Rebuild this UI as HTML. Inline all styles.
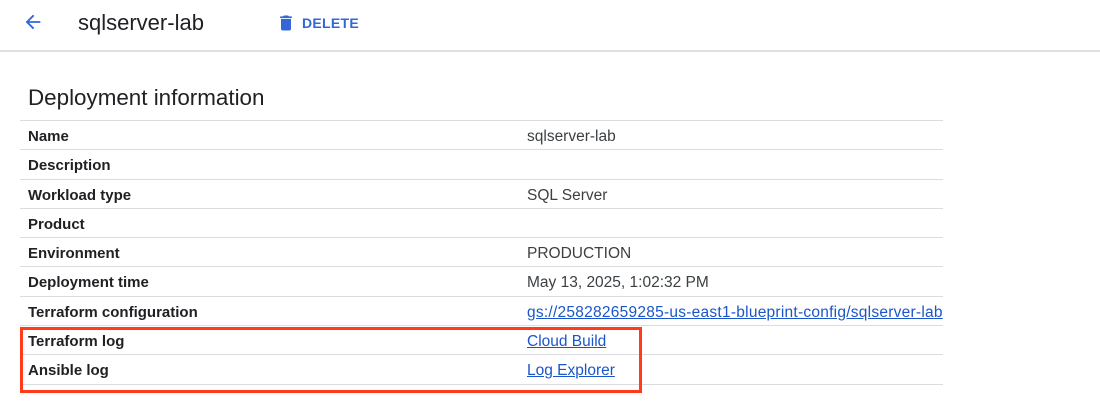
<!DOCTYPE html>
<html><head><style>
body{margin:0;width:1100px;height:403px;background:#fff;font-family:"Liberation Sans",Arial,sans-serif;position:relative;overflow:hidden;color:#202124}
.hdr{position:absolute;left:0;top:0;width:1100px;height:50px;border-bottom:2px solid #e0e0e0}
.t{position:absolute;left:78px;top:10px;font-size:22px;color:#202124}
.del{position:absolute;left:302px;top:15px;font-size:14px;font-weight:bold;color:#3367d6;letter-spacing:.3px}
h2{position:absolute;left:28px;top:85px;margin:0;font-size:22.4px;font-weight:normal}
.tbl{position:absolute;left:20px;top:120px;width:923px;border-top:1px solid #dadce0}
.r{height:28.3px;border-bottom:1px solid #dadce0;position:relative;font-size:15px;white-space:nowrap}
.r .l{position:absolute;left:8px;top:7px;font-weight:bold;color:#202124}
.r .v{position:absolute;left:507px;top:7px;color:#3c4043;font-size:15.5px}
.r a{color:#1a56c9;text-decoration:underline}
.box{position:absolute;left:20px;top:327px;width:616px;height:60px;border:3px solid #ff3b1a}
</style></head><body>
<div class="hdr">
<svg style="position:absolute;left:22px;top:11px" width="22" height="22" viewBox="0 0 24 24"><path d="M20 11H7.830l5.59-5.59L12 4l-8 8 8 8 1.41-1.41L7.83 13H20v-2z" fill="#3367d6"/></svg>
<div class="t">sqlserver-lab</div>
<svg style="position:absolute;left:276px;top:12px" width="20" height="22" viewBox="0 0 24 24"><path d="M6 19c0 1.1.9 2 2 2h8c1.1 0 2-.9 2-2V7H6v12zM19 4h-3.5l-1-1h-5l-1 1H5v2h14V4z" fill="#3367d6"/></svg>
<div class="del">DELETE</div>
</div>
<h2>Deployment information</h2>
<div class="tbl">
<div class="r"><span class="l">Name</span><span class="v">sqlserver-lab</span></div>
<div class="r"><span class="l">Description</span></div>
<div class="r"><span class="l">Workload type</span><span class="v">SQL Server</span></div>
<div class="r"><span class="l">Product</span></div>
<div class="r"><span class="l">Environment</span><span class="v">PRODUCTION</span></div>
<div class="r"><span class="l">Deployment time</span><span class="v">May 13, 2025, 1:02:32 PM</span></div>
<div class="r"><span class="l">Terraform configuration</span><span class="v"><a style="letter-spacing:.25px">gs://258282659285-us-east1-blueprint-config/sqlserver-lab</a></span></div>
<div class="r"><span class="l">Terraform log</span><span class="v"><a>Cloud Build</a></span></div>
<div class="r"><span class="l">Ansible log</span><span class="v"><a>Log Explorer</a></span></div>
</div>
<div class="box"></div>
</body></html>
